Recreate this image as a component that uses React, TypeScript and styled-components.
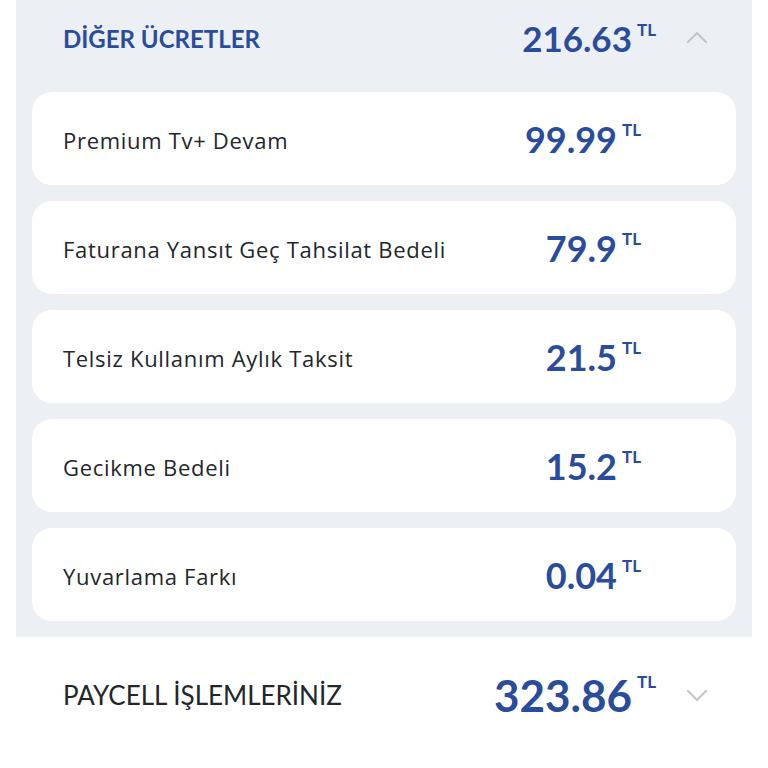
import React from "react";
import styled, { createGlobalStyle } from "styled-components";

const Global = createGlobalStyle`
  html, body { margin: 0; padding: 0; background: #ffffff; }
  body { font-family: Lato, "Noto Sans", sans-serif; }
`;

const Page = styled.div`
  width: 768px;
  height: 768px;
  background: #ffffff;
  overflow: hidden;
`;

const Panel = styled.section`
  margin: 0 16px;
  background: #eceff3;
  padding: 0 16px 16px;
  display: flex;
  flex-direction: column;
  gap: 16px;
`;

const Header = styled.div`
  height: 76px;
  display: flex;
  align-items: center;
  padding-left: 31px;
`;

const Title = styled.div<{ $dark?: boolean }>`
  flex: 1;
  font-size: ${(p) => (p.$dark ? "26px" : "24px")};
  font-weight: ${(p) => (p.$dark ? 400 : 700)};
  color: ${(p) => (p.$dark ? "#23262b" : "#2a4c9c")};
`;

const Amount = styled.div<{ $size: number }>`
  display: flex;
  align-items: flex-start;
  color: #2a4c9c;
  font-weight: 700;
  font-size: ${(p) => p.$size}px;
  line-height: 1;
`;

const Unit = styled.span`
  font-size: 17px;
  font-weight: 700;
  margin-left: 5px;
`;

const Chevron = styled.svg`
  width: 26px;
  height: 26px;
  margin-left: 28px;
  margin-right: 26px;
  flex: none;
`;

const Card = styled.div`
  height: 93px;
  background: #ffffff;
  border-radius: 20px;
  display: flex;
  align-items: center;
  padding-left: 31px;
  padding-right: 95px;
`;

const Label = styled.div`
  flex: 1;
  font-family: "Open Sans", Lato, sans-serif;
  font-size: 22px;
  letter-spacing: 0.7px;
  color: #23262b;
  padding-top: 2px;
`;

const Footer = styled.div`
  height: 116px;
  margin: 0 16px;
  padding: 0 16px 0 47px;
  display: flex;
  align-items: center;
`;

const items = [
  { label: "Premium Tv+ Devam", amount: "99.99" },
  { label: "Faturana Yansıt Geç Tahsilat Bedeli", amount: "79.9" },
  { label: "Telsiz Kullanım Aylık Taksit", amount: "21.5" },
  { label: "Gecikme Bedeli", amount: "15.2" },
  { label: "Yuvarlama Farkı", amount: "0.04" },
];

const ChevronIcon = ({ up }: { up?: boolean }) => (
  <Chevron viewBox="0 0 26 26">
    <path
      d={up ? "M4 17 L13 8 L22 17" : "M4 9 L13 18 L22 9"}
      fill="none"
      stroke="#c3c7cd"
      strokeWidth="2.2"
      strokeLinecap="round"
      strokeLinejoin="round"
    />
  </Chevron>
);

export default function App() {
  return (
    <Page>
      <Global />
      <Panel>
        <Header>
          <Title>DİĞER ÜCRETLER</Title>
          <Amount $size={35}>
            216.63<Unit>TL</Unit>
          </Amount>
          <ChevronIcon up />
        </Header>
        {items.map((it) => (
          <Card key={it.label}>
            <Label>{it.label}</Label>
            <Amount $size={36}>
              {it.amount}
              <Unit>TL</Unit>
            </Amount>
          </Card>
        ))}
      </Panel>
      <Footer>
        <Title $dark>PAYCELL İŞLEMLERİNİZ</Title>
        <Amount $size={44}>
          323.86<Unit>TL</Unit>
        </Amount>
        <ChevronIcon />
      </Footer>
    </Page>
  );
}
